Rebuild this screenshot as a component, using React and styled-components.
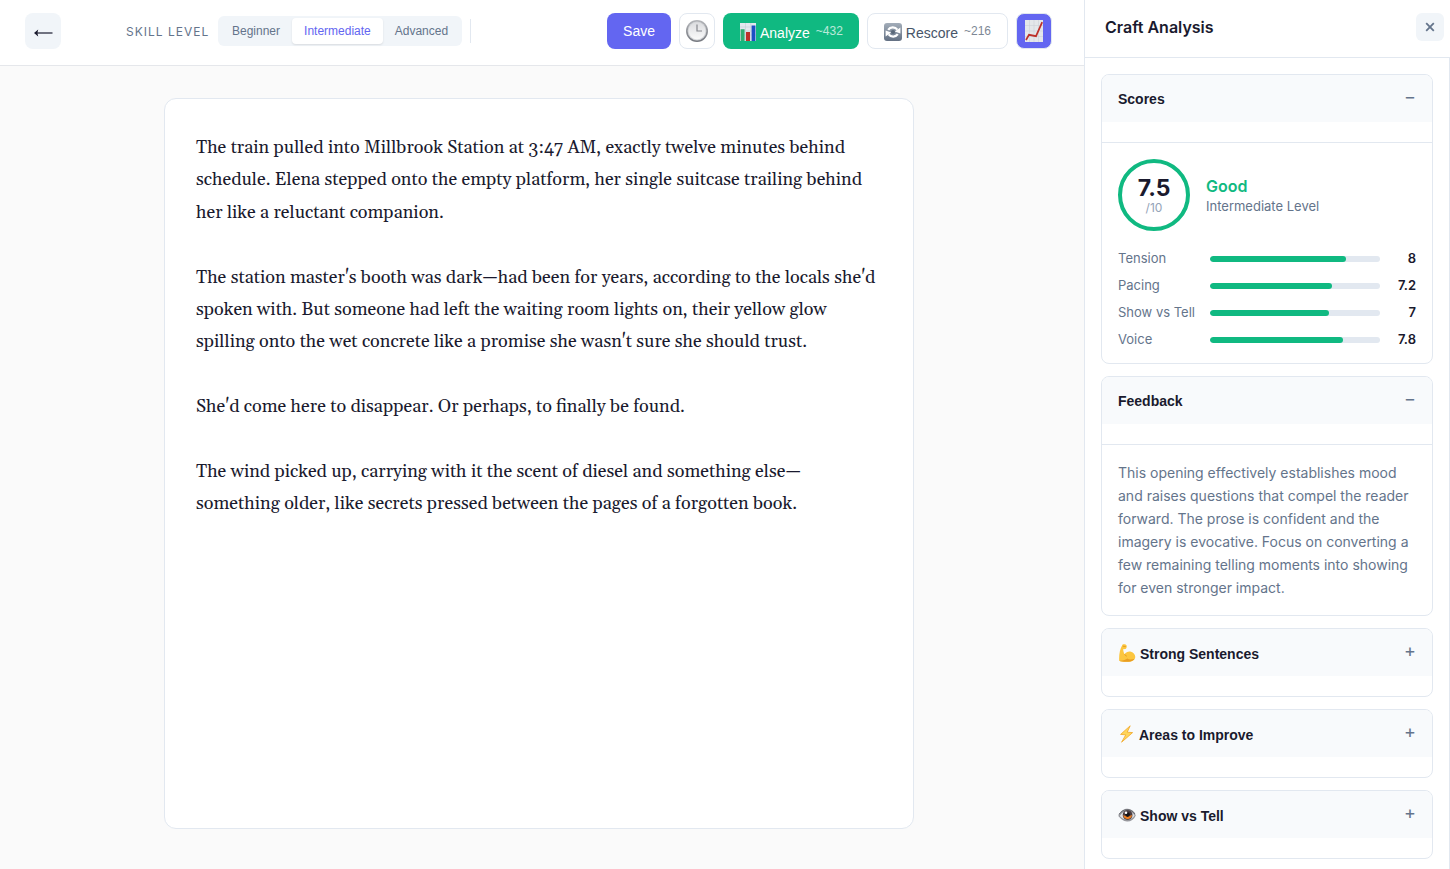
import React, { useState } from "react";
import styled, { createGlobalStyle } from "styled-components";

const GlobalStyle = createGlobalStyle`
  * {
    box-sizing: border-box;
  }

  body {
    margin: 0;
    background-color: #fafafa;
    color: #1a1a2e;
    font-family: Inter, "Open Sans", sans-serif;
  }

  button,
  textarea {
    margin: 0;
    padding: 0;
    border: none;
    color: inherit;
  }

  button {
    cursor: pointer;
    font-family: "Liberation Sans", Arial, sans-serif;
  }
`;

const LEVELS = ["Beginner", "Intermediate", "Advanced"];

const SCORES = [
  { name: "Tension", value: 8 },
  { name: "Pacing", value: 7.2 },
  { name: "Show vs Tell", value: 7 },
  { name: "Voice", value: 7.8 },
];

const STORY = [
  "The train pulled into Millbrook Station at 3:47 AM, exactly twelve minutes behind schedule. Elena stepped onto the empty platform, her single suitcase trailing behind her like a reluctant companion.",
  "The station master's booth was dark—had been for years, according to the locals she'd spoken with. But someone had left the waiting room lights on, their yellow glow spilling onto the wet concrete like a promise she wasn't sure she should trust.",
  "She'd come here to disappear. Or perhaps, to finally be found.",
  "The wind picked up, carrying with it the scent of diesel and something else—something older, like secrets pressed between the pages of a forgotten book.",
].join("\n\n");

/* icons */

const ArrowIcon = () => (
  <svg width="20" height="20" viewBox="0 0 20 20" fill="none">
    <path d="M3 12H19.5" stroke="#1a1a2e" strokeWidth="1.2" />
    <path d="M1 12L5.2 8.4L4.4 12L5.2 15.6Z" fill="#1a1a2e" />
  </svg>
);

const CloseIcon = () => (
  <svg width="10" height="10" viewBox="0 0 10 10" fill="none">
    <path d="M1.2 1.2L8.8 8.8M8.8 1.2L1.2 8.8" stroke="#64748b" strokeWidth="1.8" />
  </svg>
);

const ClockIcon = () => (
  <svg width="22" height="22" viewBox="0 0 22 22" fill="none">
    <defs>
      <linearGradient id="clockRim" x1="0" y1="0" x2="0" y2="1">
        <stop offset="0" stopColor="#b4b6ba" />
        <stop offset="1" stopColor="#74777e" />
      </linearGradient>
      <linearGradient id="clockFace" x1="0" y1="0" x2="0" y2="1">
        <stop offset="0" stopColor="#dcdde0" />
        <stop offset="1" stopColor="#fafafa" />
      </linearGradient>
    </defs>
    <circle cx="11" cy="11" r="11" fill="url(#clockRim)" />
    <circle cx="11" cy="11" r="9.4" fill="#d3d5d8" />
    <circle cx="11" cy="11" r="8.4" fill="url(#clockFace)" />
    <path d="M11 4.5V11H16" stroke="#85878d" strokeWidth="1.2" />
  </svg>
);

const BarsIcon = () => (
  <svg width="17" height="18" viewBox="-1 0 17 18" fill="none">
    <path d="M0 0H16V18H0Z" fill="#e3e8ee" />
    <path d="M0 4H16M0 8H16M0 12H16M5.5 0V18M10.8 0V18" stroke="#c3ccd6" strokeWidth=".6" />
    <path d="M.6 6.2H4.6V18H.6Z" fill="#2fae73" />
    <path d="M6 9H10V18H6Z" fill="#c02f2a" />
    <path d="M11.6 2.5H15.4V18H11.6Z" fill="#1c4fc4" />
  </svg>
);

const RescoreIcon = () => (
  <svg width="18" height="18" viewBox="0 0 18 18" fill="none">
    <defs>
      <linearGradient id="rescoreBg" x1="0" y1="0" x2="0" y2="1">
        <stop offset="0" stopColor="#a3adb9" />
        <stop offset="1" stopColor="#637083" />
      </linearGradient>
    </defs>
    <rect width="18" height="18" rx="3" fill="url(#rescoreBg)" />
    <path d="M4.2 6.8C6.2 3.8 11 3.6 13.4 6.6" stroke="#fff" strokeWidth="2.2" />
    <path d="M13.8 11.2C11.8 14.2 7 14.4 4.6 11.4" stroke="#fff" strokeWidth="2.2" />
    <path d="M16.4 4.6V10.4L10.8 8.6Z" fill="#fff" />
    <path d="M1.6 13.4V7.6L7.2 9.4Z" fill="#fff" />
    <circle cx="9" cy="9" r="2" fill="#5a6879" />
  </svg>
);

const TrendIcon = () => (
  <svg width="18" height="22" viewBox="0 0 18 22" fill="none">
    <path d="M0 0H18V22H0Z" fill="#e4e7ea" />
    <path d="M0 5.5H18M0 11H18M0 16.5H18M4.5 0V22M9 0V22M13.5 0V22" stroke="#ccd1d7" strokeWidth=".6" />
    <path d="M1 20L4 14.8L11 16.2L17.2 2.2" stroke="#bd302a" strokeWidth="1.7" />
  </svg>
);

const ArmIcon = () => (
  <svg width="18" height="18" viewBox="0 0 18 18" fill="none">
    <path
      d="M4.6.6C5.8-.2 8 .2 8.6 1.6C9 2.8 8.4 4.4 7.6 5C6.6 5.4 6.2 4.8 5.4 5C5 6.6 5.6 8.6 6.6 10.2C8 8.2 10.8 7 13 7.8C15.8 8.8 17.6 11 17.2 13.4C16.8 15.8 14 17.6 10.4 17.8C6.6 18 3 17.8 1.2 16.8C.8 12.4 1.6 5 4.6.6Z"
      fill="#fcc63f"
    />
    <path d="M1.2 16.8C5 17.2 7.6 15.4 9.4 14.6C11 16 14 15.6 16.6 14.8C15.4 16.8 13 17.8 10.4 17.8C6.6 18 3 17.8 1.2 16.8Z" fill="#e99e22" />
    <path d="M4.8 2.2L7.8 2.6M6.6 10.2C7 11.2 7.8 12 8.8 12.2" stroke="#de921e" strokeWidth=".8" />
  </svg>
);

const BoltIcon = () => (
  <svg width="17" height="18" viewBox="0 0 17 18" fill="none">
    <path
      d="M12.2.8L2.6 9.4L7.8 9.8L3.6 17.2L14.6 7.6L9.2 7.2Z"
      fill="#ffd65a"
      stroke="#f2ae35"
      strokeWidth=".9"
      strokeLinejoin="round"
    />
  </svg>
);

const EyeIcon = () => (
  <svg width="18" height="18" viewBox="0 0 18 18" fill="none">
    <path d="M.3 10C2.6 4.6 6.2 2.4 10 2.8C13.8 3.2 16.4 5.8 17.8 9.4C15.8 13.6 12.6 15.6 9 15.4C5.2 15.2 2.8 13 .3 10Z" fill="#97989d" />
    <path d="M1.8 10C4 6.4 6.4 5 9.4 5C12.6 5 15 6.8 16.6 9.6C14.8 12.4 12 13.8 9.2 13.6C6.2 13.6 3.8 12.4 1.8 10Z" fill="#e2e3e6" />
    <circle cx="9.6" cy="9" r="4.9" fill="#4a3d42" />
    <path d="M5.2 9C5.4 14.4 13.8 14.6 14 9C12.6 10 7.2 10.4 5.2 9Z" fill="#ee7f22" />
    <circle cx="9.6" cy="8.6" r="2.3" fill="#141217" />
    <circle cx="8" cy="6.8" r="1.3" fill="#fff" />
    <path d="M1 8.4C4.6 2.8 12.8 1.6 17 8" stroke="#66676d" strokeWidth="1" />
  </svg>
);

function Section({ title, icon, defaultOpen, children }) {
  const [open, setOpen] = useState(Boolean(defaultOpen));

  return (
    <Card>
      <CardHeading>
        <CardToggle aria-expanded={open} onClick={() => setOpen(!open)}>
          <CardTitle $hasIcon={Boolean(icon)}>
            {icon}
            {title}
          </CardTitle>
          <ToggleSign>{open ? "−" : "+"}</ToggleSign>
        </CardToggle>
      </CardHeading>
      {open && children && <CardBody>{children}</CardBody>}
    </Card>
  );
}

function App() {
  const [level, setLevel] = useState("Intermediate");
  const [text, setText] = useState(STORY);
  const [showPanel, setShowPanel] = useState(true);

  return (
    <Page>
      <GlobalStyle />
      <Workspace>
        <Toolbar>
          <BackButton aria-label="Back">
            <ArrowIcon />
          </BackButton>
          <LevelGroup>
            <LevelLabel id="skill-level">SKILL LEVEL</LevelLabel>
            <LevelSwitch role="group" aria-labelledby="skill-level">
              {LEVELS.map((name) => (
                <LevelButton
                  key={name}
                  $active={name === level}
                  aria-pressed={name === level}
                  onClick={() => setLevel(name)}
                >
                  {name}
                </LevelButton>
              ))}
            </LevelSwitch>
            <Divider />
          </LevelGroup>
          <Actions>
            <ActionButton $variant="primary">Save</ActionButton>
            <IconButton aria-label="Version history">
              <ClockIcon />
            </IconButton>
            <ActionButton $variant="success">
              <ActionLabel>
                <BarsIcon />
                Analyze
              </ActionLabel>
              <Cost>~432</Cost>
            </ActionButton>
            <ActionButton>
              <ActionLabel>
                <RescoreIcon />
                Rescore
              </ActionLabel>
              <Cost>~216</Cost>
            </ActionButton>
            <IconButton
              $active={showPanel}
              aria-label="Toggle analysis"
              aria-pressed={showPanel}
              onClick={() => setShowPanel(!showPanel)}
            >
              <TrendIcon />
            </IconButton>
          </Actions>
        </Toolbar>
        <EditorArea>
          <Editor
            aria-label="Story text"
            spellCheck={false}
            value={text}
            onChange={(e) => setText(e.target.value)}
          />
        </EditorArea>
      </Workspace>

      {showPanel && (
        <Panel>
          <PanelHeader>
            <PanelTitle>Craft Analysis</PanelTitle>
            <CloseButton aria-label="Close" onClick={() => setShowPanel(false)}>
              <CloseIcon />
            </CloseButton>
          </PanelHeader>
          <PanelContent>
            <Section title="Scores" defaultOpen>
              <Overall>
                <ScoreCircle>
                  <ScoreValue>7.5</ScoreValue>
                  <ScoreMax>/10</ScoreMax>
                </ScoreCircle>
                <div>
                  <Verdict>Good</Verdict>
                  <VerdictLevel>{level} Level</VerdictLevel>
                </div>
              </Overall>
              <ScoreList>
                {SCORES.map((score) => (
                  <ScoreRow key={score.name}>
                    <span>{score.name}</span>
                    <Track>
                      <Fill style={{ width: `${score.value * 10}%` }} />
                    </Track>
                    <RowValue>{score.value}</RowValue>
                  </ScoreRow>
                ))}
              </ScoreList>
            </Section>
            <Section title="Feedback" defaultOpen>
              <Feedback>
                This opening effectively establishes mood and raises questions
                that compel the reader forward. The prose is confident and the
                imagery is evocative. Focus on converting a few remaining
                telling moments into showing for even stronger impact.
              </Feedback>
            </Section>
            <Section title="Strong Sentences" icon={<ArmIcon />} />
            <Section title="Areas to Improve" icon={<BoltIcon />} />
            <Section title="Show vs Tell" icon={<EyeIcon />} />
          </PanelContent>
        </Panel>
      )}
    </Page>
  );
}

const Page = styled.div`
  display: flex;
  height: 100vh;
`;

const Workspace = styled.main`
  flex: 1;
  min-width: 0;
  display: flex;
  flex-direction: column;
`;

const Toolbar = styled.header`
  display: flex;
  align-items: center;
  padding: 13px 32px 16px 25px;
  background-color: #fff;
  border-bottom: 1px solid #e5e7eb;
`;

const BackButton = styled.button`
  display: flex;
  align-items: center;
  justify-content: center;
  width: 36px;
  height: 36px;
  border-radius: 8px;
  background-color: #f1f5f9;
`;

const LevelGroup = styled.div`
  display: flex;
  align-items: center;
  margin-left: 65px;
`;

const LevelLabel = styled.span`
  width: 92px;
  font-size: 12px;
  letter-spacing: 1px;
  color: #64748b;
`;

const LevelSwitch = styled.div`
  display: flex;
  padding: 2px;
  border-radius: 6px;
  background-color: #f1f5f9;
`;

const LevelButton = styled.button`
  height: 26px;
  padding: 0 12px;
  border-radius: 4px;
  font-size: 12px;
  color: ${(props) => (props.$active ? "#6366f1" : "#64748b")};
  background-color: ${(props) => (props.$active ? "#fff" : "transparent")};
  box-shadow: ${(props) =>
    props.$active ? "0 1px 2px rgba(0, 0, 0, 0.1)" : "none"};
`;

const Divider = styled.div`
  width: 1px;
  height: 24px;
  margin-left: 8px;
  background-color: #e2e8f0;
`;

const Actions = styled.div`
  display: flex;
  gap: 8px;
  margin-left: auto;
`;

const variants = {
  primary: { background: "#6366f1", border: "none", color: "#fff" },
  success: { background: "#10b981", border: "none", color: "#fff" },
  plain: { background: "#fff", border: "1px solid #e2e8f0", color: "#475569" },
};

const ActionButton = styled.button`
  display: flex;
  align-items: center;
  gap: 6px;
  height: 36px;
  padding: 0 16px;
  border: ${(props) => variants[props.$variant || "plain"].border};
  border-radius: 8px;
  font-size: 14px;
  color: ${(props) => variants[props.$variant || "plain"].color};
  background-color: ${(props) =>
    variants[props.$variant || "plain"].background};
`;

const ActionLabel = styled.span`
  display: flex;
  align-items: center;
  gap: 4px;
  padding-top: 3px;

  svg {
    margin-bottom: 2px;
  }
`;

const Cost = styled.span`
  font-size: 12px;
  opacity: 0.7;
`;

const IconButton = styled.button`
  display: flex;
  align-items: center;
  justify-content: center;
  width: 36px;
  height: 36px;
  border: 1px solid #e2e8f0;
  border-radius: 8px;
  background-color: ${(props) => (props.$active ? "#6366f1" : "#fff")};
`;

const EditorArea = styled.div`
  flex: 1;
  display: flex;
  justify-content: center;
  padding: 32px 38px 40px 32px;
`;

const Editor = styled.textarea`
  width: 100%;
  max-width: 750px;
  && {
    padding: 33px 31px 31px;
    border: 1px solid #e2e8f0;
  }
  border-radius: 12px;
  outline: none;
  resize: none;
  background-color: #fff;
  font-family: Georgia, Gelasio, "Liberation Serif", serif;
  font-size: 18px;
  line-height: 1.8;
`;

const Panel = styled.aside`
  flex: none;
  width: 366px;
  display: flex;
  flex-direction: column;
  border-left: 1px solid #e2e8f0;
  background-color: #fff;
`;

const PanelHeader = styled.div`
  display: flex;
  align-items: center;
  justify-content: space-between;
  padding: 13px 6px 16px 20px;
`;

const PanelTitle = styled.h2`
  margin: 0;
  font-size: 16px;
  font-weight: 600;
`;

const CloseButton = styled.button`
  display: flex;
  align-items: center;
  justify-content: center;
  width: 28px;
  height: 28px;
  border-radius: 6px;
  background-color: #f1f5f9;
`;

const PanelContent = styled.div`
  flex: 1;
  display: flex;
  flex-direction: column;
  gap: 12px;
  min-height: 0;
  overflow: hidden;
  padding: 16px 16px 0;
  border-top: 1px solid #e2e8f0;
  border-right: 1px solid #e2e8f0;
`;

const Card = styled.section`
  flex: none;
  overflow: hidden;
  border: 1px solid #e2e8f0;
  border-radius: 8px;
`;

const CardHeading = styled.h3`
  margin: 0 0 20px;
`;

const CardToggle = styled.button`
  display: flex;
  align-items: center;
  justify-content: space-between;
  width: 100%;
  height: 47px;
  padding: 0 16px;
  background-color: #f8fafc;
`;

const CardTitle = styled.span`
  display: flex;
  align-items: center;
  gap: 4px;
  padding-top: ${(props) => (props.$hasIcon ? "2px" : "0")};
  font-size: 14px;
  font-weight: bold;

  svg {
    margin-bottom: 2px;
  }
`;

const ToggleSign = styled.span`
  padding-bottom: 4px;
  font-family: Inter, sans-serif;
  font-size: 18px;
  line-height: 20px;
  color: #64748b;
`;

const CardBody = styled.div`
  padding: 16px;
  border-top: 1px solid #e2e8f0;
`;

const Overall = styled.div`
  display: flex;
  align-items: center;
  gap: 16px;
  margin-bottom: 20px;
`;

const ScoreCircle = styled.div`
  display: flex;
  flex-direction: column;
  align-items: center;
  justify-content: center;
  width: 72px;
  height: 72px;
  border: 4px solid #10b981;
  border-radius: 50%;
`;

const ScoreValue = styled.span`
  font-size: 23px;
  line-height: 26px;
  font-weight: 700;
`;

const ScoreMax = styled.span`
  font-size: 12px;
  line-height: 14px;
  color: #94a3b8;
`;

const Verdict = styled.div`
  margin-top: 2px;
  font-size: 16px;
  line-height: 20px;
  font-weight: 600;
  color: #10b981;
`;

const VerdictLevel = styled.div`
  font-size: 13px;
  line-height: 20px;
  color: #64748b;
`;

const ScoreList = styled.div`
  display: flex;
  flex-direction: column;
  gap: 12px;
`;

const ScoreRow = styled.div`
  display: grid;
  grid-template-columns: 80px 1fr 24px;
  align-items: center;
  gap: 12px;
  font-size: 13px;
  line-height: 15px;
  color: #64748b;
  white-space: nowrap;
`;

const Track = styled.div`
  height: 6px;
  border-radius: 3px;
  overflow: hidden;
  background-color: #e2e8f0;
`;

const Fill = styled.div`
  height: 100%;
  border-radius: 3px;
  background-color: #10b981;
`;

const RowValue = styled.span`
  font-weight: 600;
  text-align: right;
  color: #1a1a2e;
`;

const Feedback = styled.p`
  margin: 0;
  font-size: 14px;
  line-height: 23px;
  color: #64748b;
`;

export default App;
